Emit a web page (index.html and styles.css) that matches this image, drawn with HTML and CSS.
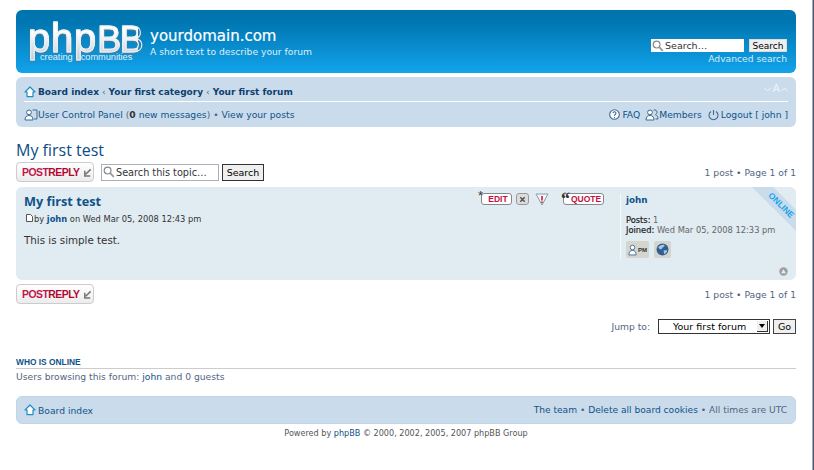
FILE: index.html
```html
<!DOCTYPE html>
<html lang="en">
<head>
  <meta charset="UTF-8">
  <title>My first test</title>
  <link rel="stylesheet" href="styles.css">
</head>
<body>
<div class="wrap">
  <div class="headerbar">
    <div class="logo">
      <span class="logo-word">php<span>BB</span></span>
      <div class="logo-tag"><span>creating</span><span>communities</span></div>
    </div>
    <div class="site">
      <div class="site-name">yourdomain.com</div>
      <div class="site-desc">A short text to describe your forum</div>
    </div>
    <div class="header-search">
      <div class="search-row">
        <div class="input search-top">
          <svg class="lens" viewBox="0 0 12 12"><circle cx="4.600" cy="4.600" r="3.400" fill="#fff" stroke="#888" stroke-width="1.200"/><path d="M7.200 7.200l3.600 3.600" stroke="#999" stroke-width="1.800"/></svg>
          <span>Search…</span>
        </div>
        <div class="btn btn-light">Search</div>
      </div>
      <a class="adv">Advanced search</a>
    </div>
  </div>

  <div class="navbar">
    <div class="nav-row nav-top">
      <div class="crumbs">
        <svg class="ico-home" viewBox="0 0 12 12"><path d="M6 1L1 6h2v4.600h6V6h2z" fill="#fff" stroke="#1b8fc4" stroke-width="1.200" stroke-linejoin="round"/></svg>
        <b>Board index</b><i>‹</i><b>Your first category</b><i>‹</i><b>Your first forum</b>
      </div>
      <div class="fontsize">
        <svg viewBox="0 0 7 5"><path d="M.5 1l3 3 3-3" fill="none" stroke="#eef4f9"/></svg>
        <span>A</span>
        <svg viewBox="0 0 7 5"><path d="M.5 4l3-3 3 3" fill="none" stroke="#eef4f9"/></svg>
      </div>
    </div>
    <div class="nav-row nav-bottom">
      <div class="nav-left">
        <svg class="ico-ucp" viewBox="0 0 14 12"><circle cx="5" cy="3.400" r="2.400" fill="#fff" stroke="#3f6a91"/><path d="M1 11c0-3 1.500-4.500 4-4.500S9 8 9 11z" fill="#fff" stroke="#3f6a91"/><path d="M8.500 1h4.500v9H10" fill="none" stroke="#3f6a91"/></svg>
        <span><a>User Control Panel</a> (<b>0</b> <a>new messages</a>) • <a>View your posts</a></span>
      </div>
      <div class="nav-right">
        <span class="nav-item">
          <svg class="ico-sm" viewBox="0 0 12 12"><circle cx="6" cy="5.500" r="4.800" fill="#fff" stroke="#3f6a91" stroke-width="1.100"/><path d="M4.500 4.300c0-2 3-2 3 0 0 1.200-1.500 1.200-1.500 2.400M6 8v1" fill="none" stroke="#3f6a91" stroke-width="1.100"/></svg>FAQ
        </span>
        <span class="nav-item">
          <svg class="ico-ucp" viewBox="0 0 14 12"><circle cx="5" cy="3.400" r="2.400" fill="#fff" stroke="#3f6a91"/><path d="M1 11c0-3 1.500-4.500 4-4.500S9 8 9 11z" fill="#fff" stroke="#3f6a91"/><path d="M8.500 1.200c2-.8 3.500.3 3.500 2 0 1.200-.8 2-1.500 2.500 1.500.5 2.500 2 2.500 4.300h-2.500" fill="none" stroke="#3f6a91"/></svg>Members
        </span>
        <span class="nav-item">
          <svg class="ico-sm" viewBox="0 0 12 12"><path d="M3.500 2.500a4.500 4.500 0 1 0 5 0" fill="none" stroke="#3f6a91" stroke-width="1.100"/><path d="M6 1v5" stroke="#3f6a91" stroke-width="1.100"/></svg>Logout [ john ]
        </span>
      </div>
    </div>
  </div>

  <h2 class="topic-title">My first test</h2>

  <div class="action-bar">
    <div class="reply-btn">POST<span>REPLY</span><svg class="reply-arrow" viewBox="0 0 10 10"><path d="M8.500 1.500L3 7M2 3v6h6" fill="none" stroke="#777" stroke-width="1.700"/></svg></div>
    <div class="input search-topic">
      <svg class="lens" viewBox="0 0 12 12"><circle cx="4.600" cy="4.600" r="3.400" fill="#fff" stroke="#888" stroke-width="1.200"/><path d="M7.200 7.200l3.600 3.600" stroke="#999" stroke-width="1.800"/></svg>
      <span>Search this topic…</span>
    </div>
    <div class="btn btn-dark">Search</div>
    <div class="pagination">1 post • Page 1 of 1</div>
  </div>

  <div class="post">
    <div class="ribbon"><span>ONLINE</span></div>
    <div class="postbody">
      <div class="post-head">
        <h3>My first test</h3>
        <div class="post-btns">
          <span class="pill pill-edit">EDIT</span>
          <span class="sq"><svg viewBox="0 0 8 8"><path d="M1.500 1.500l5 5M6.500 1.500l-5 5" stroke="#555" stroke-width="1.800"/></svg></span>
          <svg class="warn" viewBox="0 0 14 13"><path d="M1 1h12L7 12z" fill="#f1f5f8" stroke="#8d9aa5"/><path d="M7 3v4.500M7 8.500v1.500" stroke="#c40f35" stroke-width="1.500"/></svg>
          <span class="pill pill-quote">QUOTE</span>
        </div>
      </div>
      <p class="author">
        <svg class="ico-doc" viewBox="0 0 7 8"><path d="M.5.500h4l2 2v5h-6z" fill="#fff" stroke="#555"/></svg>by <b>john</b> on Wed Mar 05, 2008 12:43 pm
      </p>
      <p class="content">This is simple test.</p>
    </div>
    <div class="postprofile">
      <div class="poster">john</div>
      <div class="stat"><b>Posts:</b> 1</div>
      <div class="stat"><b>Joined:</b> Wed Mar 05, 2008 12:33 pm</div>
      <div class="contact">
        <span class="cbtn cbtn-pm">
          <svg viewBox="0 0 10 12"><circle cx="5" cy="3.200" r="2.500" fill="#fff" stroke="#3f6a91"/><path d="M1 11.500c0-3.500 1.500-5 4-5s4 1.500 4 5z" fill="#fff" stroke="#3f6a91"/></svg><b>PM</b>
        </span>
        <span class="cbtn cbtn-web">
          <svg viewBox="0 0 12 12"><circle cx="6" cy="6" r="5.500" fill="#2f5f92"/><path d="M2 4c1.500-2 4-3 6-2 0 1.500-2 1.500-2.500 3S3 6 2 4zM7 7c1.500-.5 3-.5 3.500 0-.5 2-2 3-3 3.300z" fill="#a9c4dc"/></svg>
        </span>
      </div>
    </div>
    <div class="back2top"><svg viewBox="0 0 10 10"><circle cx="5" cy="5" r="4.700" fill="#a0a0a0"/><path d="M5 2.500L7.600 7H2.400z" fill="#e8eef3"/></svg></div>
  </div>

  <div class="action-bar action-bottom">
    <div class="reply-btn">POST<span>REPLY</span><svg class="reply-arrow" viewBox="0 0 10 10"><path d="M8.500 1.500L3 7M2 3v6h6" fill="none" stroke="#777" stroke-width="1.700"/></svg></div>
    <div class="pagination">1 post • Page 1 of 1</div>
  </div>

  <div class="jumpbox">
    <span class="jump-label">Jump to:</span>
    <div class="select"><span>Your first forum</span><i></i></div>
    <div class="btn btn-go">Go</div>
  </div>

  <h3 class="online-title">WHO IS ONLINE</h3>
  <p class="online-text">Users browsing this forum: <a>john</a> and 0 guests</p>

  <div class="navbar footbar">
    <div class="nav-left">
      <svg class="ico-home" viewBox="0 0 12 12"><path d="M6 1L1 6h2v4.600h6V6h2z" fill="#fff" stroke="#1b8fc4" stroke-width="1.200" stroke-linejoin="round"/></svg>
      <a>Board index</a>
    </div>
    <div class="foot-right"><a>The team</a> • <a>Delete all board cookies</a> • All times are UTC</div>
  </div>

  <div class="copyright">Powered by <a>phpBB</a> © 2000, 2002, 2005, 2007 phpBB Group</div>
</div>
</body>
</html>
```

FILE: styles.css
```css
* {
    box-sizing: border-box;
}

html, body {
    margin: 0;
    padding: 0;
}

body {
    font-family: "DejaVu Sans", Verdana, sans-serif;
    font-size: 9.200px;
    color: #536482;
    overflow: hidden;
    height: 470px;
    /* window edge visible at the right of the shot */
    background: linear-gradient(to right, #fff 812px, #b3a98c 812px, #b3a98c 813px, #3a5a94 813px);
}

a {
    color: #105289;
}

.wrap {
    width: 814px;
    padding: 10px 18px 0 16px;
}

/* header */
.headerbar {
    display: flex;
    align-items: flex-start;
    height: 63px;
    padding: 0 9px 0 12px;
    border-radius: 6px;
    background: linear-gradient(#0074ad 0, #0076b1 12px, #12a3eb 100%);
    color: #fff;
}

.logo {
    width: 110px;
    height: 50px;
    margin-top: 6px;
    position: relative;
}

.logo-word {
    display: block;
    font-family: "Liberation Sans", Arial, sans-serif;
    font-size: 40px;
    line-height: 44px;
    letter-spacing: 0.800px;
    white-space: nowrap;
    background: linear-gradient(#ffffff 35%, #b9c6cf 100%);
    -webkit-background-clip: text;
    background-clip: text;
    color: transparent;
    -webkit-text-stroke: 1px #eef3f6;
    filter: drop-shadow(0 1px 1px #4d7c9b);
}

.logo-word span {
    font-size: 36px;
    letter-spacing: -1.500px;
}

.logo-tag {
    position: absolute;
    left: 12px;
    top: 36px;
    display: flex;
    gap: 8px;
    font-family: "Liberation Sans", Arial, sans-serif;
    font-size: 9.200px;
    line-height: 11px;
    white-space: nowrap;
    color: #e6f0f6;
}

.site {
    margin-left: 12px;
    padding-top: 17px;
}

.site-name {
    font-size: 15px;
    line-height: 18px;
    -webkit-text-stroke: 0.200px #fff;
}

.site-desc {
    font-size: 9.200px;
    line-height: 12px;
    margin-top: 1px;
    color: #dff0fa;
}

.header-search {
    margin-left: auto;
    padding-top: 29px;
    display: flex;
    flex-direction: column;
    align-items: flex-end;
}

.search-row {
    display: flex;
    gap: 5px;
}

.input {
    display: flex;
    align-items: center;
    background: #fff;
    color: #333;
}

.lens {
    width: 12px;
    height: 12px;
    flex: none;
}

.search-top {
    width: 93px;
    height: 13px;
    padding-left: 1px;
    font-size: 9.500px;
    gap: 1px;
}

.btn {
    display: flex;
    align-items: center;
    justify-content: center;
    color: #000;
    font-size: 9.500px;
}

.btn-light {
    width: 38px;
    height: 13px;
    background: #efefef;
    border: 1px solid #dcdcdc;
    font-size: 9px;
}

.adv {
    margin-top: 1px;
    line-height: 11px;
    color: #d5ecf9;
}

/* nav bars */
.navbar {
    height: 50px;
    margin-top: 4px;
    padding: 0 8px;
    border-radius: 6px;
    background: #cadceb;
}

.nav-row {
    display: flex;
    align-items: center;
    justify-content: space-between;
}

.nav-top {
    height: 25px;
    padding-top: 5px;
    border-bottom: 1px solid #fff;
}

.nav-bottom {
    height: 25px;
    color: #105289;
}

.crumbs {
    display: flex;
    align-items: center;
    color: #0f3f6f;
    font-size: 9px;
}

.crumbs i {
    font-style: normal;
    margin: 0 3px;
    color: #536482;
}

.ico-home {
    width: 12px;
    height: 12px;
    margin-right: 2px;
}

.fontsize {
    display: flex;
    align-items: center;
    gap: 1px;
    align-self: flex-start;
    color: #eef4f9;
    font-size: 11px;
    line-height: 14px;
}

.fontsize svg {
    width: 7px;
    height: 5px;
}

.nav-left, .nav-right, .nav-item {
    display: flex;
    align-items: center;
}

.nav-left {
    color: #536482;
}

.nav-left b {
    color: #333;
}

.nav-right {
    gap: 5px;
    color: #105289;
}

.ico-ucp {
    width: 14px;
    height: 12px;
}

.ico-sm {
    width: 13px;
    height: 12px;
    margin-right: 1px;
}

/* topic */
.topic-title {
    margin: 13px 0 0;
    font-family: "Open Sans", sans-serif;
    font-size: 16px;
    line-height: 20px;
    font-weight: normal;
    color: #0d4c85;
}

.action-bar {
    display: flex;
    align-items: center;
    height: 20px;
    margin-top: 2px;
}

.reply-btn {
    display: flex;
    align-items: center;
    width: 78px;
    height: 20px;
    padding-left: 5px;
    border: 1px solid #ccc;
    border-radius: 4px;
    background: linear-gradient(#fff, #ececec);
    font-family: "Liberation Sans", Arial, sans-serif;
    font-size: 10.400px;
    letter-spacing: -0.500px;
    font-weight: bold;
    color: #c0174a;
}

.reply-btn span {
    color: #b0082f;
}

.reply-arrow {
    width: 9px;
    height: 9px;
    margin-left: 3px;
}

.search-topic {
    width: 118px;
    height: 17px;
    margin-left: 7px;
    padding-left: 1px;
    border: 1px solid #a8b0bb;
    font-size: 9.700px;
    gap: 1px;
}

.btn-dark {
    width: 42px;
    height: 17px;
    margin-left: 3px;
    background: #efefef;
    border: 1px solid #333;
}

.pagination {
    margin-left: auto;
}

/* post */
.post {
    position: relative;
    display: flex;
    height: 93px;
    margin-top: 5px;
    border-radius: 6px;
    background: #e1ebf2;
    overflow: hidden;
}

.postbody {
    width: 604px;
    flex: none;
    padding: 0 8px;
}

.post-head {
    display: flex;
    justify-content: space-between;
    padding-top: 6px;
}

.post-head h3 {
    margin: 0;
    font-family: "Open Sans", sans-serif;
    font-size: 12.700px;
    line-height: 17px;
    font-weight: 700;
    color: #105289;
}

.post-btns {
    display: flex;
    align-items: flex-start;
    margin-right: 8px;
}

.pill {
    position: relative;
    display: flex;
    align-items: center;
    justify-content: center;
    height: 12px;
    background: #fff;
    border: 1px solid #888;
    border-radius: 3px;
    font-family: "Liberation Sans", Arial, sans-serif;
    font-size: 8.500px;
    font-weight: bold;
    color: #c0103f;
}

.pill::before {
    position: absolute;
    left: -4px;
    top: -6px;
    font-size: 13px;
    font-weight: normal;
    color: #333;
}

.pill-edit {
    width: 31px;
    padding-left: 3px;
}

.pill-edit::before {
    content: "*";
}

.pill-quote {
    width: 41px;
    margin-left: 14px;
    padding-left: 5px;
}

.pill-quote::before {
    content: "“";
    font-family: "Liberation Serif", serif;
    font-size: 18px;
    font-weight: bold;
    left: -3px;
    top: -5px;
}

.sq {
    display: flex;
    align-items: center;
    justify-content: center;
    width: 13px;
    height: 12px;
    margin-left: 4px;
    background: #dcdcdc;
    border: 1px solid #999;
    border-radius: 3px;
}

.sq svg {
    width: 7px;
    height: 7px;
}

.warn {
    width: 14px;
    height: 13px;
    margin-left: 6px;
}

.author {
    margin: 3px 0 0;
    line-height: 12px;
    color: #333;
    font-size: 8.300px;
}

.author b {
    color: #105289;
}

.ico-doc {
    width: 7px;
    height: 8px;
    margin: 0 1px 0 2px;
}

.content {
    margin: 9px 0 0;
    font-size: 10.300px;
    line-height: 13px;
    color: #333;
}

.postprofile {
    width: 176px;
    height: 66px;
    margin-top: 7px;
    padding-left: 5px;
    border-left: 1px solid #f4f8fb;
    font-size: 8.300px;
    color: #666;
    line-height: 10px;
}

.poster {
    font-weight: bold;
    color: #105289;
    font-size: 8.800px;
    line-height: 12px;
    margin-bottom: 9px;
}

.stat {
    white-space: nowrap;
}

.stat b {
    font-weight: normal;
    color: #222;
    -webkit-text-stroke: 0.200px #222;
}

.contact {
    display: flex;
    gap: 5px;
    margin-top: 6px;
}

.cbtn {
    display: flex;
    align-items: center;
    justify-content: center;
    height: 17px;
    background: #d5d5cf;
    border-radius: 2px;
    color: #333;
}

.cbtn-pm {
    width: 23px;
    gap: 1px;
}

.cbtn-pm svg {
    width: 9px;
    height: 12px;
}

.cbtn-pm b {
    font-size: 6px;
    font-family: "Liberation Sans", Arial, sans-serif;
}

.cbtn-web {
    width: 17px;
}

.cbtn-web svg {
    width: 13px;
    height: 13px;
}

.ribbon {
    position: absolute;
    top: 11px;
    right: -25px;
    width: 80px;
    height: 15px;
    transform: rotate(45deg);
    background: #cadceb;
    text-align: center;
    font-family: "Liberation Sans", Arial, sans-serif;
    font-size: 8.500px;
    line-height: 15px;
    font-weight: bold;
    color: #12a3eb;
}

.back2top {
    position: absolute;
    right: 8px;
    bottom: 4px;
    width: 9px;
    height: 9px;
    display: flex;
}

.action-bottom {
    margin-top: 4px;
}

.jumpbox {
    display: flex;
    align-items: center;
    justify-content: flex-end;
    height: 16px;
    margin-top: 14px;
}

.jump-label {
    margin-right: 8px;
}

.select {
    position: relative;
    width: 112px;
    height: 15px;
    padding-left: 14px;
    background: #fff;
    border: 1px solid #333;
    color: #000;
    font-size: 9.500px;
    line-height: 14px;
}

.select i {
    position: absolute;
    top: 1px;
    right: 1px;
    width: 11px;
    height: 11px;
    background: #eee;
    border-right: 1px solid #333;
    border-bottom: 1px solid #333;
}

.select i::after {
    content: "";
    position: absolute;
    left: 2px;
    top: 3px;
    border: 3px solid transparent;
    border-top: 4px solid #000;
}

.btn-go {
    width: 23px;
    height: 15px;
    margin-left: 3px;
    background: #efefef;
    border: 1px solid #444;
}

.online-title {
    margin: 23px 0 0;
    border-bottom: 1px solid #ccc;
    font-family: "Liberation Sans", Arial, sans-serif;
    font-size: 8.400px;
    line-height: 11px;
    font-weight: bold;
    color: #105289;
}

.online-text {
    margin: 2px 0 0;
    line-height: 12px;
}

.footbar {
    display: flex;
    align-items: center;
    justify-content: space-between;
    height: 28px;
    margin-top: 13px;
    padding: 0 8px 0 7px;
    border: 1px solid #c1d5e6;
}

.footbar .nav-left {
    color: #105289;
}

.foot-right {
    font-size: 9.100px;
}

.copyright {
    margin-top: 4px;
    text-align: center;
    font-size: 8.100px;
    line-height: 11px;
    color: #555;
}
```
